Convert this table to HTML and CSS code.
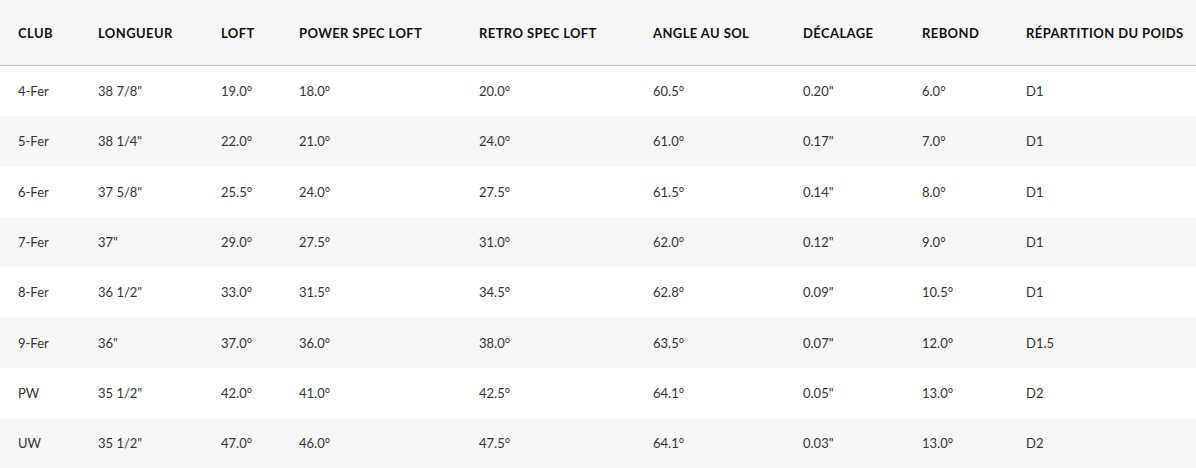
FILE: index.html
```html
<!DOCTYPE html>
<html lang="fr">
<head>
<meta charset="utf-8">
<link rel="stylesheet" href="styles.css">
</head>
<body>
<table class="specs">
  <colgroup>
    <col class="c1"><col class="c2"><col class="c3"><col class="c4"><col class="c5"><col class="c6"><col class="c7"><col class="c8"><col class="c9">
  </colgroup>
  <thead>
    <tr><th>CLUB</th><th>LONGUEUR</th><th>LOFT</th><th>POWER SPEC LOFT</th><th>RETRO SPEC LOFT</th><th>ANGLE AU SOL</th><th>DÉCALAGE</th><th>REBOND</th><th>RÉPARTITION DU POIDS</th></tr>
  </thead>
  <tbody>
    <tr><td>4-Fer</td><td>38 7/8"</td><td>19.0°</td><td>18.0°</td><td>20.0°</td><td>60.5°</td><td>0.20"</td><td>6.0°</td><td>D1</td></tr>
    <tr><td>5-Fer</td><td>38 1/4"</td><td>22.0°</td><td>21.0°</td><td>24.0°</td><td>61.0°</td><td>0.17"</td><td>7.0°</td><td>D1</td></tr>
    <tr><td>6-Fer</td><td>37 5/8"</td><td>25.5°</td><td>24.0°</td><td>27.5°</td><td>61.5°</td><td>0.14"</td><td>8.0°</td><td>D1</td></tr>
    <tr><td>7-Fer</td><td>37"</td><td>29.0°</td><td>27.5°</td><td>31.0°</td><td>62.0°</td><td>0.12"</td><td>9.0°</td><td>D1</td></tr>
    <tr><td>8-Fer</td><td>36 1/2"</td><td>33.0°</td><td>31.5°</td><td>34.5°</td><td>62.8°</td><td>0.09"</td><td>10.5°</td><td>D1</td></tr>
    <tr><td>9-Fer</td><td>36"</td><td>37.0°</td><td>36.0°</td><td>38.0°</td><td>63.5°</td><td>0.07"</td><td>12.0°</td><td>D1.5</td></tr>
    <tr><td>PW</td><td>35 1/2"</td><td>42.0°</td><td>41.0°</td><td>42.5°</td><td>64.1°</td><td>0.05"</td><td>13.0°</td><td>D2</td></tr>
    <tr><td>UW</td><td>35 1/2"</td><td>47.0°</td><td>46.0°</td><td>47.5°</td><td>64.1°</td><td>0.03"</td><td>13.0°</td><td>D2</td></tr>
  </tbody>
</table>
</body>
</html>
```
FILE: styles.css
```css
html, body {
  margin: 0;
  padding: 0;
  background: #fff;
}
.specs {
  width: 1196px;
  border-collapse: collapse;
  table-layout: fixed;
  font-family: Lato, "Liberation Sans", sans-serif;
  font-size: 13px;
  color: #222;
}
.c1 { width: 80px; }
.c2 { width: 123px; }
.c3 { width: 78px; }
.c4 { width: 180px; }
.c5 { width: 174px; }
.c6 { width: 150px; }
.c7 { width: 119px; }
.c8 { width: 104px; }
.c9 { width: 188px; }
.specs th {
  height: 65px;
  padding: 0 0 0 18px;
  text-align: left;
  font-weight: 700;
  letter-spacing: 0.4px;
  background: #f7f7f7;
  border-bottom: 1px solid #c8c8c8;
  white-space: nowrap;
  color: #111;
}
.specs td {
  height: 50.3px;
  padding: 0 0 0 18px;
  text-align: left;
  font-weight: 400;
  color: #333;
  white-space: nowrap;
}
.specs tbody tr:nth-child(even) {
  background: #f7f7f7;
}
```
